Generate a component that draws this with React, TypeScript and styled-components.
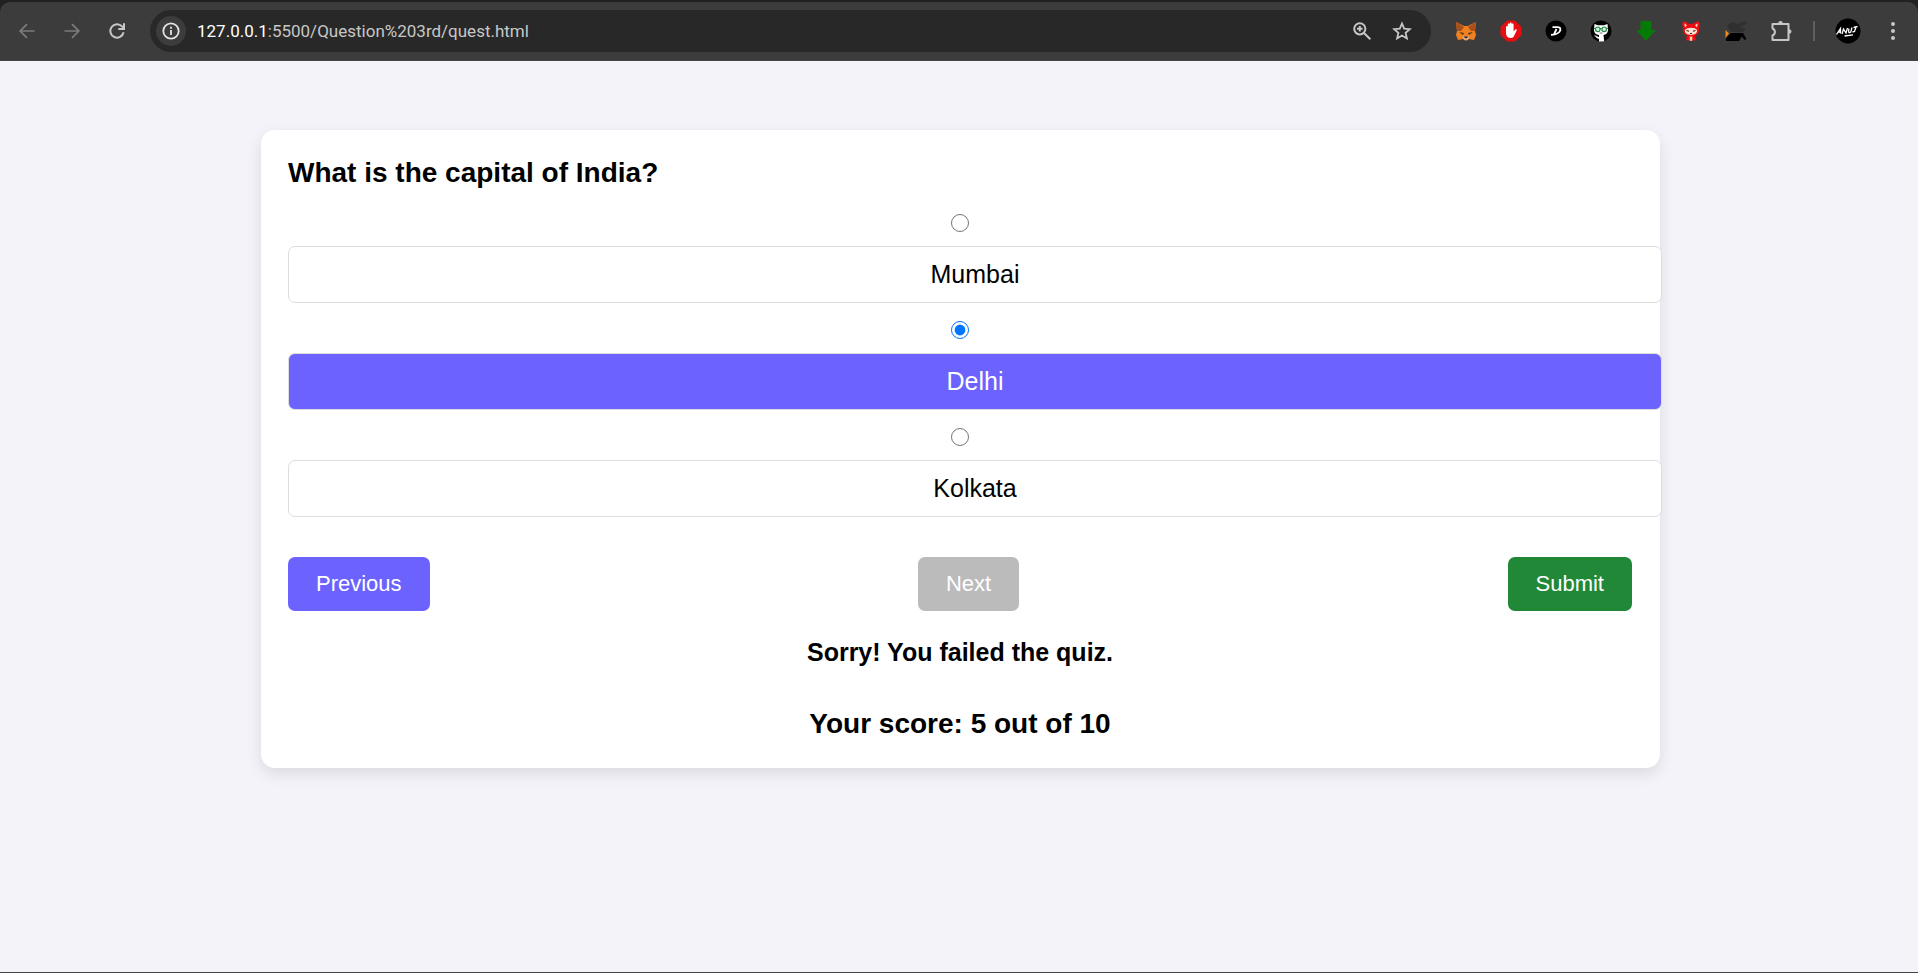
import React, { useState } from "react";
import styled, { createGlobalStyle } from "styled-components";

const GlobalStyle = createGlobalStyle`
  *, *::before, *::after { box-sizing: border-box; }
  html, body, #root { height: 100%; }
  body {
    margin: 0;
    background: #f4f3f9;
    font-family: "Liberation Sans", Arial, sans-serif;
    color: #000;
  }
`;

const Window = styled.div`
  min-height: 100%;
  display: flex;
  flex-direction: column;
  border-bottom: 1px solid #454545;
`;

const TabStrip = styled.header`
  background: #202222;
  padding-top: 2px;
`;

const Toolbar = styled.nav`
  display: flex;
  align-items: center;
  height: 59px;
  padding: 0 3px 0 4px;
  background: #3c3c3c;
  border-bottom: 1px solid #444;
  border-radius: 10px 10px 0 0;
`;

const IconButton = styled.button<{ $width?: number }>`
  display: flex;
  align-items: center;
  justify-content: center;
  flex: none;
  width: ${(p) => p.$width ?? 45}px;
  height: 42px;
  padding: 0;
  border: 0;
  background: none;
  color: #c7c7c7;
  &:disabled { color: #7b7b7b; }
`;

const AddressBar = styled.div`
  flex: 1;
  display: flex;
  align-items: center;
  height: 42px;
  margin: 0 12px 0 11px;
  padding: 0 9px 0 6px;
  border-radius: 21px;
  background: #282828;
`;

const SiteInfo = styled.button`
  display: flex;
  align-items: center;
  justify-content: center;
  width: 30px;
  height: 30px;
  padding: 0;
  border: 0;
  border-radius: 50%;
  background: #3c3c3c;
  color: #e3e3e3;
`;

const Url = styled.a`
  flex: 1;
  margin-left: 11px;
  font: 17px/24px Roboto, "Noto Sans", sans-serif;
  color: #c7c7c7;
  text-decoration: none;
  white-space: nowrap;
`;

const Host = styled.span`
  color: #fff;
`;

const Divider = styled.span`
  width: 2px;
  height: 20px;
  margin: 0 10px;
  background: #5f5f5f;
`;

const Page = styled.main`
  flex: 1;
  display: flex;
  justify-content: center;
  align-items: flex-start;
  padding: 69px 0 28px 3px;
`;

const Card = styled.form`
  width: 100%;
  max-width: 1399px;
  padding: 28px 28px 28px 27px;
  background: #fff;
  border-radius: 14px;
  box-shadow: 0 6px 16px rgba(0, 0, 0, 0.1);
`;

const Question = styled.h1`
  margin: 0 0 26px;
  font-size: 28px;
  line-height: 30px;
`;

const Option = styled.div`
  display: flex;
  flex-direction: column;
  align-items: center;
  height: 107px;
`;

const Radio = styled.input`
  width: 18px;
  height: 18px;
  margin: 0 0 14px;
`;

const OptionLabel = styled.label<{ $selected: boolean }>`
  align-self: flex-start;
  width: calc(100% + 30px);
  padding: 14px;
  border: 1px solid #ddd;
  border-radius: 7px;
  background: ${(p) => (p.$selected ? "#6c63ff" : "#fff")};
  color: ${(p) => (p.$selected ? "#fff" : "#000")};
  font-size: 25px;
  line-height: 27px;
  text-align: center;
`;

const Actions = styled.div`
  display: flex;
  justify-content: space-between;
  margin-top: 22px;
`;

const ActionButton = styled.button<{ $tone?: string }>`
  padding: 14px 28px;
  border: 0;
  border-radius: 7px;
  background: ${(p) => p.$tone ?? "#6c63ff"};
  color: #fff;
  font: 22px/26px "Liberation Sans", Arial, sans-serif;
  &:disabled { background: #bbb; }
`;

const Verdict = styled.p`
  margin: 27px 0 0;
  font-size: 25px;
  line-height: 28px;
  font-weight: bold;
  text-align: center;
`;

const Score = styled.h2`
  margin: 42px 0 0;
  font-size: 28px;
  line-height: 32px;
  text-align: center;
`;

const Stroke = ({ size = 20, width = 2, children }: { size?: number; width?: number; children: React.ReactNode }) => (
  <svg width={size} height={size} viewBox="0 0 20 20" fill="none" stroke="currentColor" strokeWidth={width}>
    {children}
  </svg>
);

const BackIcon = () => (
  <Stroke width={1.7}><path d="M17.5 10H3.5M10 3.2 3.2 10l6.8 6.8" /></Stroke>
);
const ForwardIcon = () => (
  <Stroke width={1.7}><path d="M2.5 10h14M10 3.2l6.8 6.8-6.8 6.8" /></Stroke>
);
const ReloadIcon = () => (
  <Stroke width={2}><path d="M16.6 11.3A6.700 6.700 0 1 1 15 5.400l1.700 1.700M17 2.200v5.700h-5.700" /></Stroke>
);
const InfoIcon = () => (
  <Stroke width={1.8}>
    <circle cx="10" cy="10" r="7.7" />
    <path d="M10 9v5M10 5.800v1.900" />
  </Stroke>
);
const ZoomIcon = () => (
  <Stroke>
    <circle cx="7.8" cy="7.8" r="5.6" />
    <path d="M12 12l6.300 6.300M7.800 5v5.600M5 7.800h5.600" />
  </Stroke>
);
const StarIcon = () => (
  <Stroke width={1.8}>
    <path d="M10 2.500l2.200 5.200 5.600.5-4.200 3.700 1.300 5.500L10 14.500l-4.900 2.900 1.300-5.500-4.200-3.700 5.600-.5z" />
  </Stroke>
);
const FoxIcon = () => (
  <svg width="20" height="20" viewBox="0 0 20 20">
    <path d="M0 1l8 4h4l8-4-1 9 1 4-2 5-5-1-2 1.500H9L7 18l-5 1-2-5 1-4z" fill="#f0811e" />
    <path d="M0 1l8 5-3 4H1zM20 1l-8 5 3 4h4z" fill="#a84f1c" />
    <path d="M3 11l5 1-1 2zM17 11l-5 1 1 2z" fill="#4b3423" />
    <path d="M7 15.500h6l-1 3H8z" fill="#e0cbb8" />
    <path d="M8 15.500h4l-.8 1.700H8.800z" fill="#1c1c22" />
  </svg>
);
const HandIcon = () => (
  <svg width="22" height="22" viewBox="0 0 22 22">
    <path d="M7 .5h8L21.500 7v8L15 21.500H7L.5 15V7z" fill="#e70d10" />
    <path d="M6 7.200c0-1.500 1.800-1.500 1.800 0V4.500c0-1.500 1.900-1.500 1.900 0v-1c0-1.500 2-1.500 2 0v1c0-1.500 1.900-1.500 1.900 0v7l1.600-2c1-.9 2 .1 1.500 1l-2.500 5C13.500 17.300 12.600 18 11 18c-3.400 0-5-2-5-5z" fill="#fff" />
  </svg>
);
const DiscIcon = () => (
  <svg width="22" height="22" viewBox="0 0 22 22">
    <circle cx="11" cy="11" r="10.5" fill="#000" />
    <path d="M7.500 7.200h5c3.500 0 3.500 2.800 1.800 4.800-1.800 2-4.500 2.800-8.300 2.800M11.500 9l-2.300 5" fill="none" stroke="#fff" strokeWidth="1.8" />
  </svg>
);
const CatIcon = () => (
  <svg width="22" height="22" viewBox="0 0 22 22">
    <circle cx="11" cy="11" r="10.5" fill="#000" />
    <path d="M4.500 4l3.500 1.300h6L17.500 4l.5 5.500c0 3.500-2 5-4.500 5.500l.7 6.200-2 .3H9v-2.700c-2.500 0-2.800-2.300-5-3.100 2.500-.8 3.200 1.500 5 1.400V15c-3-.5-5-2-5-5.500z" fill="#fff" />
    <path d="M4 8.500h14" stroke="#2b8a4e" strokeWidth="1" />
    <circle cx="7.8" cy="9.3" r="2.3" fill="#d9f2df" stroke="#2b8a4e" strokeWidth="1.2" />
    <circle cx="14.2" cy="9.3" r="2.3" fill="#d9f2df" stroke="#2b8a4e" strokeWidth="1.2" />
    <path d="M9.500 13h3" stroke="#555" strokeWidth=".8" />
  </svg>
);
const DownIcon = () => (
  <svg width="20" height="20" viewBox="0 0 20 20">
    <path d="M4.500 0h11v9H20L10 20 0 9h4.500z" fill="#067a06" />
  </svg>
);
const RedCatIcon = () => (
  <svg width="20" height="20" viewBox="0 0 20 20">
    <path d="M1.500 1.500C2.500-.5 5.500.5 7.500 2.800h5C14.500.5 17.500-.5 18.500 1.500c.6 2-.2 4-.5 5.500.8 4-1 6.500-4 7.800L15 19c-2 1.200-3.500.2-5-.5-1.500.7-3 1.700-5 .5l1-4.200C3 13.500 1.200 11 2 7c-.3-1.500-1.100-3.500-.5-5.500z" fill="#ee0c12" />
    <path d="M3.300 2.500c1 0 2 1 2.500 2L4 6.500zM16.700 2.500c-1 0-2 1-2.500 2L16 6.500z" fill="#fbd9c0" />
    <path d="M4 9c2-3 10-3 12 0 1.200 6.500-13.200 6.500-12 0z" fill="#fbe3cf" />
    <path d="M5.500 9.500l2.500.8M14.500 9.500l-2.500.8M9 12.500h2" stroke="#3b1a1a" strokeWidth="1.1" />
    <path d="M8.700 15.500h2.600v4.300H8.700z" fill="#f8cdb8" />
  </svg>
);
const HatIcon = () => (
  <svg width="22" height="20" viewBox="0 0 22 20">
    <path d="M2 5l5-4 6 2 7-3 1.500 3-6.500 3 6 2-3 3H6z" fill="#303030" />
    <path d="M1 20v-3l5-5h12l3.500 6-1.800 1-3-3.500L14 20z" fill="#000" />
    <path d="M.5 9L4 12.500.5 17z" fill="#f58a12" />
  </svg>
);
const PuzzleIcon = () => (
  <svg width="22" height="22" viewBox="0 0 22 22" fill="none" stroke="currentColor" strokeWidth="2">
    <path d="M2.500 4h16v16h-16v-4.500c3.200-1.200 3.200-5.800 0-7z" strokeLinejoin="round" />
    <path d="M8.200 3.500c0-3.300 4.600-3.300 4.600 0zM19 9.200c3.300 0 3.300 4.600 0 4.600z" fill="currentColor" stroke="none" />
  </svg>
);
const AvatarIcon = () => (
  <svg width="26" height="26" viewBox="0 0 26 26">
    <circle cx="13" cy="13" r="12.5" fill="#000" />
    <path d="M1.500 16.500l4-6v5M3 14h3M7 16l1.500-5 2.500 4 1.500-5M14 10.500c-1 4 0 5 1.800 3.500L17 9.500M21 9l-1.500 4.500-2 .5M18.500 9.500l4-1M9.500 18l8.500-1.200" fill="none" stroke="#fff" strokeWidth="1.3" />
  </svg>
);
const DotsIcon = () => (
  <svg width="20" height="20" viewBox="0 0 20 20" fill="currentColor">
    <circle cx="10" cy="3" r="2" />
    <circle cx="10" cy="10" r="2" />
    <circle cx="10" cy="17" r="2" />
  </svg>
);

const extensions = [
  { name: "Wallet", Icon: FoxIcon },
  { name: "Ad blocker", Icon: HandIcon },
  { name: "Dark mode", Icon: DiscIcon },
  { name: "Repository viewer", Icon: CatIcon },
  { name: "Downloader", Icon: DownIcon },
  { name: "Red cat", Icon: RedCatIcon },
  { name: "Hat", Icon: HatIcon },
  { name: "Extensions", Icon: PuzzleIcon },
];

const cities = ["Mumbai", "Delhi", "Kolkata"];

export default function App() {
  const [answer, setAnswer] = useState("Delhi");
  return (
    <Window>
      <GlobalStyle />
      <TabStrip>
        <Toolbar>
          <IconButton aria-label="Back" disabled><BackIcon /></IconButton>
          <IconButton aria-label="Forward" disabled><ForwardIcon /></IconButton>
          <IconButton aria-label="Reload"><ReloadIcon /></IconButton>
          <AddressBar>
            <SiteInfo aria-label="Site information"><InfoIcon /></SiteInfo>
            <Url href="#"><Host>127.0.0.1</Host>:5500/Question%203rd/quest.html</Url>
            <IconButton $width={40} aria-label="Zoom"><ZoomIcon /></IconButton>
            <IconButton $width={40} aria-label="Bookmark"><StarIcon /></IconButton>
          </AddressBar>
          {extensions.map(({ name, Icon }) => (
            <IconButton key={name} aria-label={name}><Icon /></IconButton>
          ))}
          <Divider />
          <IconButton aria-label="Profile"><AvatarIcon /></IconButton>
          <IconButton aria-label="Menu"><DotsIcon /></IconButton>
        </Toolbar>
      </TabStrip>
      <Page>
        <Card onSubmit={(e) => e.preventDefault()}>
          <Question>What is the capital of India?</Question>
          {cities.map((city) => (
            <Option key={city}>
              <Radio
                type="radio"
                name="capital"
                id={city}
                checked={answer === city}
                onChange={() => setAnswer(city)}
              />
              <OptionLabel htmlFor={city} $selected={answer === city}>{city}</OptionLabel>
            </Option>
          ))}
          <Actions>
            <ActionButton type="button">Previous</ActionButton>
            <ActionButton type="button" disabled>Next</ActionButton>
            <ActionButton type="submit" $tone="#218838">Submit</ActionButton>
          </Actions>
          <Verdict>Sorry! You failed the quiz.</Verdict>
          <Score>Your score: 5 out of 10</Score>
        </Card>
      </Page>
    </Window>
  );
}
